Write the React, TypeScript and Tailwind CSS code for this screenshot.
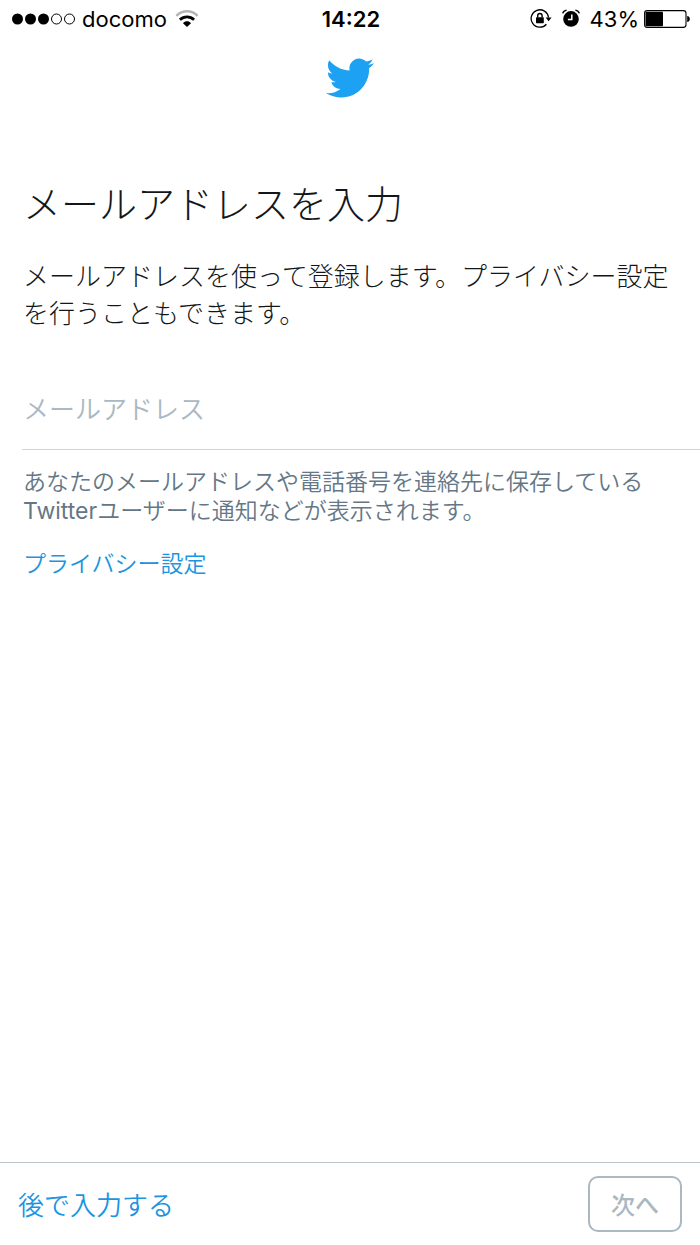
import { useState } from "react";

function SignalDots() {
  return (
    <svg className="h-3 w-16" viewBox="0 0 64 12" aria-hidden="true">
      <circle cx="5.5" cy="6" r="5.5" />
      <circle cx="18.5" cy="6" r="5.5" />
      <circle cx="31.5" cy="6" r="5.5" />
      <g fill="none" stroke="currentColor" strokeWidth="1">
        <circle cx="44.5" cy="6" r="5" />
        <circle cx="57.5" cy="6" r="5" />
      </g>
    </svg>
  );
}

function WifiIcon() {
  return (
    <svg className="h-[18px] w-6" viewBox="0 0 24 18" aria-hidden="true">
      <g fill="none" strokeWidth="2.4">
        <path d="M1.4 5.8C7.4-.2 16.6-.2 22.6 5.8" stroke="#b3b3b3" />
        <path d="M4.9 9.8c4.2-3.9 10-3.9 14.2 0" stroke="#000" strokeWidth="2.8" />
      </g>
      <path d="M8 13.2c2.3-2.5 5.7-2.5 8 0L12 17z" />
    </svg>
  );
}

function RotationLockIcon() {
  return (
    <svg className="h-5 w-[22px]" viewBox="0 0 22 20" aria-hidden="true">
      <path
        d="M16.4 15.2A8.7 8.7 0 1 1 18.5 8.6"
        fill="none"
        stroke="currentColor"
        strokeWidth="1.3"
      />
      <path d="M15.6 8.4h6L18.6 12.2z" />
      <rect x="6" y="8.2" width="7.8" height="6" rx="0.6" />
      <path
        d="M7.7 8.6V6.7a2.2 2.2 0 0 1 4.4 0v1.9"
        fill="none"
        stroke="currentColor"
        strokeWidth="1.4"
      />
    </svg>
  );
}

function AlarmIcon() {
  return (
    <svg className="h-5 w-[18px]" viewBox="0 0 18 20" aria-hidden="true">
      <circle cx="9" cy="9.9" r="7.8" />
      <path
        d="M.7 4.4C1.2 2.6 2.6 1.4 4.6 1.1M17.3 4.4c-.5-1.8-1.9-3-3.9-3.3"
        fill="none"
        stroke="currentColor"
        strokeWidth="1.4"
      />
      <path d="M9.8 5.6v5H5.9" fill="none" stroke="#fff" strokeWidth="1.5" />
    </svg>
  );
}

function BatteryIcon() {
  return (
    <svg className="h-[18px] w-[46px]" viewBox="0 0 46 18" aria-hidden="true">
      <rect
        x="0.6"
        y="0.6"
        width="41.4"
        height="16.8"
        rx="2.6"
        fill="none"
        stroke="currentColor"
        strokeWidth="1.1"
      />
      <rect x="1.5" y="1.8" width="17.5" height="14.4" rx="1" />
      <path d="M43.2 6c1.7.2 2.6 1.3 2.6 3s-.9 2.8-2.6 3z" />
    </svg>
  );
}

function StatusBar() {
  return (
    <div className="grid h-[38px] grid-cols-[1fr_auto_1fr] items-center pr-[10px] pl-3 font-['Inter','Liberation_Sans',sans-serif] text-[22px] leading-none text-black">
      <div className="flex items-center gap-2">
        <div className="flex items-center gap-[6px]">
          <SignalDots />
          <span>docomo</span>
        </div>
        <WifiIcon />
      </div>
      <time className="font-semibold">14:22</time>
      <div className="flex items-center justify-end gap-[5px]">
        <div className="flex items-center gap-[10px]">
          <RotationLockIcon />
          <AlarmIcon />
          <span>43%</span>
        </div>
        <BatteryIcon />
      </div>
    </div>
  );
}

function TwitterLogo() {
  return (
    <svg
      className="size-[48px] text-[#1da1f2]"
      viewBox="0 0 24 24"
      fill="currentColor"
      role="img"
      aria-label="Twitter"
    >
      <path d="M23.953 4.57a10 10 0 0 1-2.825.775 4.958 4.958 0 0 0 2.163-2.723c-.951.555-2.005.959-3.127 1.184a4.92 4.92 0 0 0-8.384 4.482C7.69 8.095 4.067 6.13 1.64 3.162a4.822 4.822 0 0 0-.666 2.475c0 1.71.87 3.213 2.188 4.096a4.904 4.904 0 0 1-2.228-.616v.06a4.923 4.923 0 0 0 3.946 4.827 4.996 4.996 0 0 1-2.212.085 4.936 4.936 0 0 0 4.604 3.417 9.867 9.867 0 0 1-6.102 2.105c-.39 0-.779-.023-1.17-.067a13.995 13.995 0 0 0 7.557 2.209c9.053 0 13.998-7.496 13.998-13.985 0-.21 0-.42-.015-.63A9.935 9.935 0 0 0 24 4.59z" />
    </svg>
  );
}

export default function App() {
  const [email, setEmail] = useState("");

  return (
    <div className="flex min-h-screen flex-col bg-white font-['Noto_Sans_CJK_JP',sans-serif] text-[#14171a]">
      <StatusBar />
      <header className="flex justify-center pt-4">
        <TwitterLogo />
      </header>

      <main className="flex-1 pt-[72px] pl-[22px]">
        <h1 className="pl-px text-[38px] leading-[56px] font-light">
          <label htmlFor="email">メールアドレスを入力</label>
        </h1>
        <p className="mt-[26px] pr-[22px] pl-px text-[26px] leading-[37px] font-light">
          メールアドレスを使って登録します。プライバシー設定を行うこともできます。
        </p>
        <input
          id="email"
          type="email"
          value={email}
          onChange={(event) => setEmail(event.target.value)}
          placeholder="メールアドレス"
          className="mt-9 block h-[84px] w-full border-b border-[#ccd6dd] pl-px text-[26px] font-[350] outline-none placeholder:text-[#aab8c2]"
        />
        <p className="mt-[18px] pr-[22px] pl-px font-['Inter','Noto_Sans_CJK_JP',sans-serif] text-[23px] leading-[29px] font-[350] text-[#657786]">
          あなたのメールアドレスや電話番号を連絡先に保存している
          <br />
          <span className="font-normal">Twitter</span>
          ユーザーに通知などが表示されます。
        </p>
        <a
          href="#privacy"
          className="mt-5 inline-block pl-px text-[23px] leading-8 font-[350] text-[#1b95e0]"
        >
          プライバシー設定
        </a>
      </main>

      <footer className="flex items-center justify-between border-t border-[#bcc5cc] px-[18px] py-[13px]">
        <button
          type="button"
          className="text-[26px] leading-9 font-[350] text-[#1b95e0]"
        >
          後で入力する
        </button>
        <button
          type="button"
          className="h-14 rounded-[10px] border-2 border-[#aab8c2] px-[21px] text-[24px] leading-9 font-medium text-[#aab8c2]"
        >
          次へ
        </button>
      </footer>
    </div>
  );
}
